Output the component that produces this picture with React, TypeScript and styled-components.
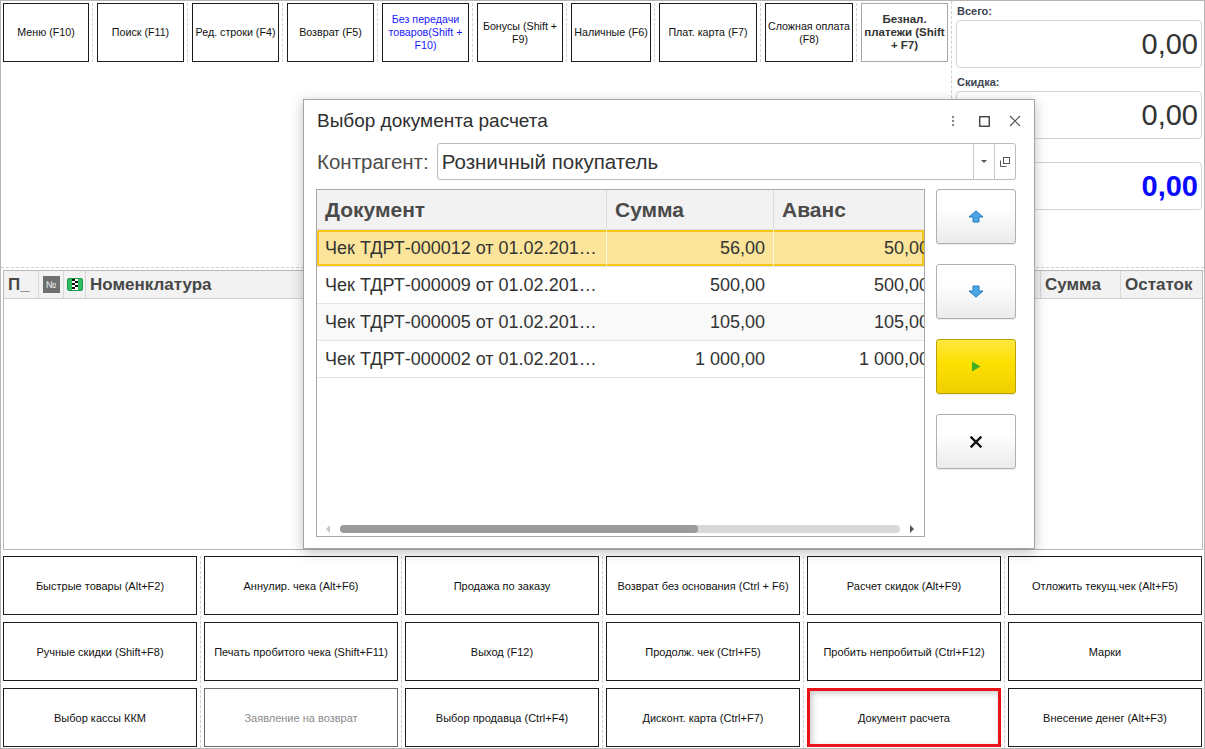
import React from "react";
import styled, { createGlobalStyle, css } from "styled-components";

const GlobalStyle = createGlobalStyle`
  html, body { margin: 0; padding: 0; background: #fff; }
  body { font-family: "Liberation Sans", Arial, sans-serif; }
  * { box-sizing: border-box; }
`;

type Tone = "normal" | "blue" | "strong" | "disabled" | "active";

const toolbar: { label: string; w: number; tone?: Tone }[] = [
  { label: "Меню (F10)", w: 86 },
  { label: "Поиск (F11)", w: 87 },
  { label: "Ред. строки (F4)", w: 87 },
  { label: "Возврат (F5)", w: 87 },
  { label: "Без передачи товаров(Shift + F10)", w: 87, tone: "blue" },
  { label: "Бонусы (Shift + F9)", w: 86 },
  { label: "Наличные (F6)", w: 80 },
  { label: "Плат. карта (F7)", w: 98 },
  { label: "Сложная оплата (F8)", w: 88 },
  { label: "Безнал. платежи (Shift + F7)", w: 87, tone: "strong" },
];

const bottomCols: { label: string; tone?: Tone }[][] = [
  [{ label: "Быстрые товары (Alt+F2)" }, { label: "Ручные скидки (Shift+F8)" }, { label: "Выбор кассы ККМ" }],
  [
    { label: "Аннулир. чека (Alt+F6)" },
    { label: "Печать пробитого чека (Shift+F11)" },
    { label: "Заявление на возврат", tone: "disabled" },
  ],
  [{ label: "Продажа по заказу" }, { label: "Выход (F12)" }, { label: "Выбор продавца (Ctrl+F4)" }],
  [
    { label: "Возврат без основания (Ctrl + F6)" },
    { label: "Продолж. чек (Ctrl+F5)" },
    { label: "Дисконт. карта (Ctrl+F7)" },
  ],
  [
    { label: "Расчет скидок (Alt+F9)" },
    { label: "Пробить непробитый (Ctrl+F12)" },
    { label: "Документ расчета", tone: "active" },
  ],
  [{ label: "Отложить текущ.чек (Alt+F5)" }, { label: "Марки" }, { label: "Внесение денег (Alt+F3)" }],
];

const docs = [
  { doc: "Чек ТДРТ-000012 от 01.02.2018 12:40:11", sum: "56,00", adv: "50,00" },
  { doc: "Чек ТДРТ-000009 от 01.02.2018 11:15:32", sum: "500,00", adv: "500,00" },
  { doc: "Чек ТДРТ-000005 от 01.02.2018 10:02:47", sum: "105,00", adv: "105,00" },
  { doc: "Чек ТДРТ-000002 от 01.02.2018 09:31:05", sum: "1 000,00", adv: "1 000,00" },
];

const Screen = styled.div`
  position: relative;
  width: 1205px;
  height: 749px;
  border: 1px solid #b5b5b5;
  background: #fff;
  display: flex;
  flex-direction: column;
  overflow: hidden;
  font-family: "Liberation Sans", Arial, sans-serif;
`;

/* ---------- top ---------- */

const TopArea = styled.div`
  flex: none;
  height: 267px;
  display: flex;
  border-bottom: 1px dashed #cfcfcf;
`;

const Toolbar = styled.div`
  flex: 1;
  display: flex;
  align-items: flex-start;
  padding: 2px 0 0 2px;
`;

const ToolCell = styled.div`
  padding: 0 3px 0 4px;
  border-right: 1px dashed #d2d2d2;

  &:first-child {
    padding-left: 0;
  }
  &:last-child {
    border-right: none;
  }
`;

const ToolButton = styled.div<{ $w: number; $tone?: Tone }>`
  width: ${(p) => p.$w}px;
  height: 59px;
  border: 1px solid #1c1c1c;
  background: #fff;
  display: flex;
  align-items: center;
  justify-content: center;
  text-align: center;
  padding: 0;
  font-size: 10.7px;
  line-height: 13px;
  color: #111;
  ${(p) =>
    p.$tone === "blue" &&
    css`
      color: #1a1aff;
    `}
  ${(p) =>
    p.$tone === "strong" &&
    css`
      border-color: #a8a8a8;
      font-weight: bold;
      color: #333;
      font-size: 11.5px;
    `}
`;

const Totals = styled.div`
  flex: none;
  width: 253px;
  border-left: 1px dashed #cfcfcf;
  padding: 3px 2px 0 4px;
  display: flex;
  flex-direction: column;
  gap: 7px;
`;

const TotalBlock = styled.div`
  display: flex;
  flex-direction: column;
  gap: 2px;
`;

const TotalLabel = styled.div`
  font-size: 11px;
  line-height: 14px;
  font-weight: bold;
  color: #3b4350;
  padding-left: 1px;
`;

const TotalBox = styled.div<{ $accent?: boolean }>`
  height: 48px;
  border: 1px solid #d4d4d4;
  border-radius: 4px;
  display: flex;
  align-items: center;
  justify-content: flex-end;
  padding-right: 3px;
  font-size: 29px;
  color: #333;
  ${(p) =>
    p.$accent &&
    css`
      color: #0a0aff;
      font-weight: bold;
    `}
`;

/* ---------- main grid ---------- */

const GridWrap = styled.div`
  flex: 1;
  display: flex;
  padding: 2px 1px 0 2px;
`;

const Grid = styled.div`
  flex: 1;
  border: 1px solid #b8b8b8;
  display: flex;
  flex-direction: column;
`;

const GridHeader = styled.div`
  display: flex;
  height: 28px;
  background: #f2f2f2;
  border-bottom: 1px solid #d0d0d0;
`;

const HeadCell = styled.div<{ $w?: number; $center?: boolean }>`
  ${(p) => (p.$w ? `width: ${p.$w}px; flex: none;` : "flex: 1;")}
  border-right: 1px solid #d9d9d9;
  display: flex;
  align-items: center;
  justify-content: ${(p) => (p.$center ? "center" : "flex-start")};
  padding-left: ${(p) => (p.$center ? 0 : 4)}px;
  font-size: 17px;
  font-weight: bold;
  color: #474747;
  white-space: nowrap;
  overflow: hidden;

  &:last-child {
    border-right: none;
  }
`;

const NumberBadge = styled.span`
  width: 17px;
  height: 17px;
  background: #6f6f6f;
  color: #f0f0f0;
  font-size: 10px;
  font-weight: normal;
  display: flex;
  align-items: center;
  justify-content: center;
`;

/* ---------- bottom buttons ---------- */

const BottomArea = styled.div`
  flex: none;
  height: 198px;
  display: flex;
  padding: 6px 0 0 2px;
`;

const BottomCol = styled.div`
  display: flex;
  flex-direction: column;
  gap: 7px;
  padding: 0 3px;
  border-right: 1px dashed #cfcfcf;

  &:first-child {
    padding-left: 0;
  }
  &:last-child {
    border-right: none;
    padding-right: 0;
  }
`;

const BottomButton = styled.div<{ $tone?: Tone }>`
  width: 194px;
  height: 59px;
  border: 1px solid #1c1c1c;
  background: #fff;
  display: flex;
  align-items: center;
  justify-content: center;
  text-align: center;
  font-size: 11px;
  color: #111;
  ${(p) =>
    p.$tone === "disabled" &&
    css`
      border-color: #6a6a6a;
      color: #8c8c8c;
    `}
  ${(p) =>
    p.$tone === "active" &&
    css`
      border: 3px solid #e8141b;
      box-shadow: inset 2px 2px 6px rgba(0, 0, 0, 0.22);
    `}
`;

/* ---------- dialog ---------- */

const Dialog = styled.div`
  position: absolute;
  left: 302px;
  top: 98px;
  width: 732px;
  height: 450px;
  background: #fff;
  border: 1px solid #a3a3a3;
  box-shadow: 0 3px 12px rgba(0, 0, 0, 0.25);
  display: flex;
  flex-direction: column;
  padding: 0 18px 11px 12px;
`;

const TitleBar = styled.div`
  height: 42px;
  flex: none;
  display: flex;
  align-items: center;
  justify-content: space-between;
  padding-left: 1px;
`;

const Title = styled.div`
  font-size: 19px;
  color: #2e2e2e;
`;

const WinControls = styled.div`
  display: flex;
  gap: 11px;
  margin-right: -9px;
`;

const WinControl = styled.span`
  width: 20px;
  height: 20px;
  display: flex;
  align-items: center;
  justify-content: center;
`;

const FieldRow = styled.div`
  height: 37px;
  margin-top: 1px;
  flex: none;
  display: flex;
  align-items: center;
  gap: 8px;
`;

const FieldLabel = styled.div`
  font-size: 20.5px;
  color: #4d4d4d;
  padding-left: 1px;
`;

const FieldInput = styled.div`
  flex: 1;
  height: 37px;
  border: 1px solid #bcbcbc;
  border-radius: 3px;
  display: flex;
`;

const FieldText = styled.div`
  flex: 1;
  display: flex;
  align-items: center;
  padding-left: 4px;
  font-size: 20.5px;
  color: #333;
`;

const FieldAddon = styled.div`
  width: 21px;
  border-left: 1px solid #c8c8c8;
  display: flex;
  align-items: center;
  justify-content: center;
`;

const Caret = styled.span`
  width: 0;
  height: 0;
  border-left: 3px solid transparent;
  border-right: 3px solid transparent;
  border-top: 3px solid #555;
`;

const Body = styled.div`
  flex: 1;
  margin-top: 9px;
  display: flex;
  gap: 11px;
`;

const DocTable = styled.div`
  width: 609px;
  border: 1px solid #a9a9a9;
  display: flex;
  flex-direction: column;
  overflow: hidden;
`;

const cols = css`
  display: grid;
  grid-template-columns: 290px 167px 164px;
`;

const THead = styled.div`
  ${cols};
  height: 40px;
  flex: none;
  background: #f2f2f2;
  border-bottom: 1px solid #dcdcdc;
`;

const TH = styled.div`
  display: flex;
  align-items: center;
  padding: 0 8px;
  font-size: 21px;
  font-weight: bold;
  color: #4a4a4a;
  border-right: 1px solid #dcdcdc;
  white-space: nowrap;
`;

const TRow = styled.div<{ $selected?: boolean; $alt?: boolean }>`
  ${cols};
  height: 37px;
  flex: none;
  border-bottom: 1px solid #e4e4e4;
  background: ${(p) => (p.$alt ? "#f9f9f9" : "#fff")};
  ${(p) =>
    p.$selected &&
    css`
      background: #fce59b;
      box-shadow: inset 0 0 0 2px #f5c71a;
    `}
`;

const TD = styled.div<{ $num?: boolean; $selected?: boolean }>`
  padding: 0 8px;
  font-size: 18px;
  line-height: 36px;
  color: #333;
  white-space: nowrap;
  overflow: hidden;
  text-overflow: ellipsis;
  text-align: ${(p) => (p.$num ? "right" : "left")};
  border-right: 1px solid ${(p) => (p.$selected ? "rgba(255,255,255,0.7)" : "transparent")};
`;

const Filler = styled.div`
  flex: 1;
`;

const ScrollBar = styled.div`
  height: 8px;
  margin-bottom: 3px;
  flex: none;
  display: flex;
  align-items: center;
  gap: 8px;
  padding: 0 8px 0 7px;
`;

const ScrollArrow = styled.span<{ $dir: "left" | "right" }>`
  width: 8px;
  display: flex;
  justify-content: center;

  &::before {
    content: "";
    border-top: 4px solid transparent;
    border-bottom: 4px solid transparent;
    ${(p) =>
      p.$dir === "left"
        ? css`
            border-right: 4px solid #c4c4c4;
          `
        : css`
            border-left: 4px solid #555;
          `}
  }
`;

const Track = styled.div`
  flex: 1;
  height: 8px;
  border-radius: 4px;
  background: #d8d8d8;
  display: flex;
`;

const Thumb = styled.div`
  width: 64%;
  height: 100%;
  border-radius: 4px;
  background: #9b9b9b;
`;

const SideButtons = styled.div`
  width: 80px;
  display: flex;
  flex-direction: column;
  gap: 20px;
`;

const SideButton = styled.div<{ $primary?: boolean }>`
  height: 55px;
  border: 1px solid #afafaf;
  border-radius: 3px;
  background: linear-gradient(#ffffff 0%, #ffffff 35%, #ebebeb 100%);
  box-shadow: 0 1px 1px rgba(0, 0, 0, 0.08);
  display: flex;
  align-items: center;
  justify-content: center;
  ${(p) =>
    p.$primary &&
    css`
      border-color: #b9a300;
      background: linear-gradient(#ffe83f 0%, #fde000 45%, #efcf00 100%);
    `}
`;

const ArrowIcon = ({ down }: { down?: boolean }) => (
  <svg width="16" height="13" viewBox="0 0 16 13" style={down ? { transform: "scaleY(-1)" } : undefined}>
    <path d="M8 0.8 L15 7 H11 V12 H5 V7 H1 Z" fill="#4ba6e6" stroke="#2b7cc0" strokeWidth="1" strokeLinejoin="round" />
  </svg>
);

const App = () => {
  return (
    <>
      <GlobalStyle />
      <Screen>
        <TopArea>
          <Toolbar>
            {toolbar.map((b) => (
              <ToolCell key={b.label}>
                <ToolButton $w={b.w} $tone={b.tone}>
                  {b.label}
                </ToolButton>
              </ToolCell>
            ))}
          </Toolbar>
          <Totals>
            <TotalBlock>
              <TotalLabel>Всего:</TotalLabel>
              <TotalBox>0,00</TotalBox>
            </TotalBlock>
            <TotalBlock>
              <TotalLabel>Скидка:</TotalLabel>
              <TotalBox>0,00</TotalBox>
            </TotalBlock>
            <TotalBlock>
              <TotalLabel>К оплате:</TotalLabel>
              <TotalBox $accent>0,00</TotalBox>
            </TotalBlock>
          </Totals>
        </TopArea>

        <GridWrap>
          <Grid>
            <GridHeader>
              <HeadCell $w={35}>П_</HeadCell>
              <HeadCell $w={25} $center>
                <NumberBadge>№</NumberBadge>
              </HeadCell>
              <HeadCell $w={22} $center>
                <svg width="16" height="13" viewBox="0 0 16 13">
                  <rect x="0.5" y="0.5" width="15" height="12" rx="1.5" fill="#2fbf62" stroke="#1f9a4a" />
                  <rect x="5" y="1" width="6" height="11" fill="#fff" />
                  <rect x="5" y="1" width="3" height="2" fill="#111" />
                  <rect x="8" y="3" width="3" height="2" fill="#111" />
                  <rect x="5" y="5" width="3" height="2" fill="#111" />
                  <rect x="8" y="7" width="3" height="2" fill="#111" />
                  <rect x="5" y="9" width="3" height="2" fill="#111" />
                </svg>
              </HeadCell>
              <HeadCell>Номенклатура</HeadCell>
              <HeadCell $w={80}>Сумма</HeadCell>
              <HeadCell $w={81}>Остаток</HeadCell>
            </GridHeader>
          </Grid>
        </GridWrap>

        <BottomArea>
          {bottomCols.map((col, i) => (
            <BottomCol key={i}>
              {col.map((b) => (
                <BottomButton key={b.label} $tone={b.tone}>
                  {b.label}
                </BottomButton>
              ))}
            </BottomCol>
          ))}
        </BottomArea>

        <Dialog>
          <TitleBar>
            <Title>Выбор документа расчета</Title>
            <WinControls>
              <WinControl>
                <svg width="4" height="12" viewBox="0 0 4 12">
                  <circle cx="2" cy="2" r="1.2" fill="#8a8a8a" />
                  <circle cx="2" cy="6" r="1.2" fill="#8a8a8a" />
                  <circle cx="2" cy="10" r="1.2" fill="#8a8a8a" />
                </svg>
              </WinControl>
              <WinControl>
                <svg width="11" height="11" viewBox="0 0 11 11">
                  <rect x="0.75" y="0.75" width="9.5" height="9.5" fill="none" stroke="#333" strokeWidth="1.3" />
                </svg>
              </WinControl>
              <WinControl>
                <svg width="12" height="12" viewBox="0 0 12 12">
                  <path d="M1 1 L11 11 M11 1 L1 11" stroke="#555" strokeWidth="1.2" />
                </svg>
              </WinControl>
            </WinControls>
          </TitleBar>

          <FieldRow>
            <FieldLabel>Контрагент:</FieldLabel>
            <FieldInput>
              <FieldText>Розничный покупатель</FieldText>
              <FieldAddon>
                <Caret />
              </FieldAddon>
              <FieldAddon>
                <svg width="10" height="10" viewBox="0 0 10 10">
                  <rect x="3.5" y="0.5" width="6" height="6" fill="#fff" stroke="#555" />
                  <path d="M0.5 3.5 V9.5 H6.5" fill="none" stroke="#555" />
                </svg>
              </FieldAddon>
            </FieldInput>
          </FieldRow>

          <Body>
            <DocTable>
              <THead>
                <TH>Документ</TH>
                <TH>Сумма</TH>
                <TH>Аванс</TH>
              </THead>
              {docs.map((d, i) => (
                <TRow key={d.doc} $selected={i === 0} $alt={i === 2}>
                  <TD $selected={i === 0}>{d.doc}</TD>
                  <TD $num $selected={i === 0}>
                    {d.sum}
                  </TD>
                  <TD $num>{d.adv}</TD>
                </TRow>
              ))}
              <Filler />
              <ScrollBar>
                <ScrollArrow $dir="left" />
                <Track>
                  <Thumb />
                </Track>
                <ScrollArrow $dir="right" />
              </ScrollBar>
            </DocTable>

            <SideButtons>
              <SideButton>
                <ArrowIcon />
              </SideButton>
              <SideButton>
                <ArrowIcon down />
              </SideButton>
              <SideButton $primary>
                <svg width="10" height="11" viewBox="0 0 10 11">
                  <path d="M1 0.5 L9.5 5.5 L1 10.5 Z" fill="#3fae22" />
                </svg>
              </SideButton>
              <SideButton>
                <svg width="12" height="12" viewBox="0 0 12 12">
                  <path d="M1.5 1.5 L10.5 10.5 M10.5 1.5 L1.5 10.5" stroke="#111" strokeWidth="2.4" strokeLinecap="square" />
                </svg>
              </SideButton>
            </SideButtons>
          </Body>
        </Dialog>
      </Screen>
    </>
  );
};

export default App;
